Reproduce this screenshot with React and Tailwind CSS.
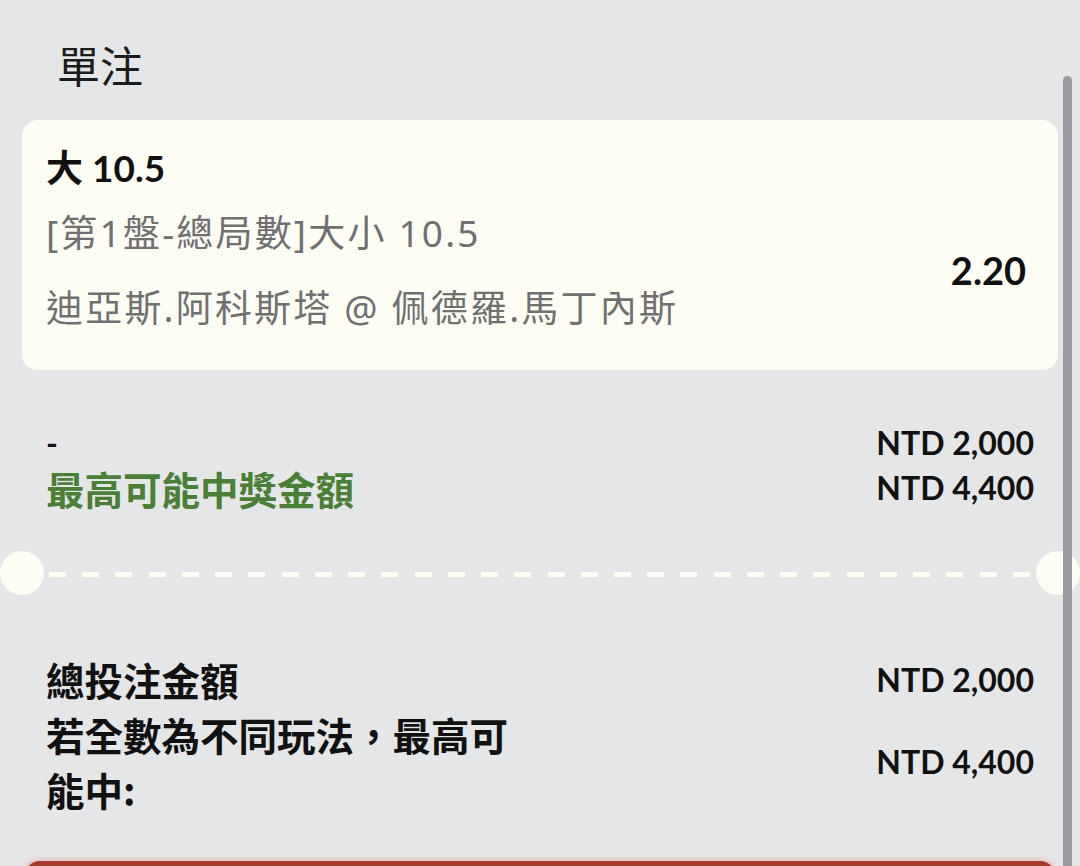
const lato = "font-['Lato','Noto_Sans_CJK_TC',sans-serif]";
const cjk = "font-['Noto_Sans_CJK_TC',sans-serif]";
const soft = "font-['Noto_Sans','Noto_Sans_CJK_TC',sans-serif]";

const dashes = Array.from({ length: 30 }, (_, i) => i);

export default function App() {
  return (
    <div className="relative h-[866px] overflow-hidden bg-[#e5e6e8] text-[#111]">
      {/* header */}
      <div className={`h-[120px] pl-[57px] pt-[42px] text-[43px] leading-[44px] text-[#1c1c1c] ${cjk}`}>單注</div>

      {/* selection card */}
      <div className="mx-[22px] h-[250px] rounded-[16px] bg-[#fdfdf4] pl-[24px] pr-[32px] pt-[26px]">
        <div className={`text-[37px] font-bold leading-[44px] ${lato}`}>大 10.5</div>
        <div className="mt-[5px] flex items-center justify-between">
          <div className={`text-[37px] leading-[75px] tracking-[2.2px] text-[#707070] ${soft}`}>
            <div>[第1盤-總局數]大小 10.5</div>
            <div>迪亞斯.阿科斯塔 @ 佩德羅.馬丁內斯</div>
          </div>
          <div className={`text-[38px] font-bold ${lato}`}>2.20</div>
        </div>
      </div>

      {/* stake */}
      <div className="mt-[51px] px-[46px]">
        <div className="flex h-[44.5px] items-center justify-between">
          <span className={`text-[32px] font-bold ${lato}`}>-</span>
          <span className={`text-[32px] font-bold ${lato}`}>NTD 2,000</span>
        </div>
        <div className="flex h-[44.5px] items-center justify-between">
          <span className={`text-[38.5px] font-bold leading-[44px] text-[#4b7f37] ${cjk}`}>最高可能中獎金額</span>
          <span className={`text-[32px] font-bold ${lato}`}>NTD 4,400</span>
        </div>
      </div>

      {/* ticket divider */}
      <div className="mt-[41px] flex h-[44px] items-center">
        <div className="h-[44px] w-[44px] shrink-0 rounded-full bg-[#fdfdf4]" />
        <div className="ml-[5px] mr-[6px] mt-[3px] flex flex-1 justify-between">
          {dashes.map((d) => (
            <div key={d} className="h-[5px] w-[17px] bg-[#fdfdf4]" />
          ))}
        </div>
        <div className="h-[44px] w-[44px] shrink-0 rounded-full bg-[#fdfdf4]" />
      </div>

      {/* totals */}
      <div className="mt-[57px] px-[46px]">
        <div className="flex h-[55px] items-center justify-between">
          <span className={`text-[38.5px] font-bold leading-[55px] ${cjk}`}>總投注金額</span>
          <span className={`text-[32px] font-bold ${lato}`}>NTD 2,000</span>
        </div>
        <div className="flex items-center justify-between">
          <span className={`w-[490px] text-[38.5px] font-bold leading-[55px] ${cjk}`}>若全數為不同玩法，最高可能中:</span>
          <span className={`text-[32px] font-bold ${lato}`}>NTD 4,400</span>
        </div>
      </div>

      <div className="mx-[24px] mt-[44px] h-[80px] rounded-[16px] bg-[#a73b2c] shadow-[0_-3px_4px_rgba(230,150,140,0.35)]" />

      {/* scrollbar */}
      <div className="absolute bottom-0 right-[8px] top-[76px] w-[9px] rounded-t-full bg-[#9a9aa0]" />
    </div>
  );
}
